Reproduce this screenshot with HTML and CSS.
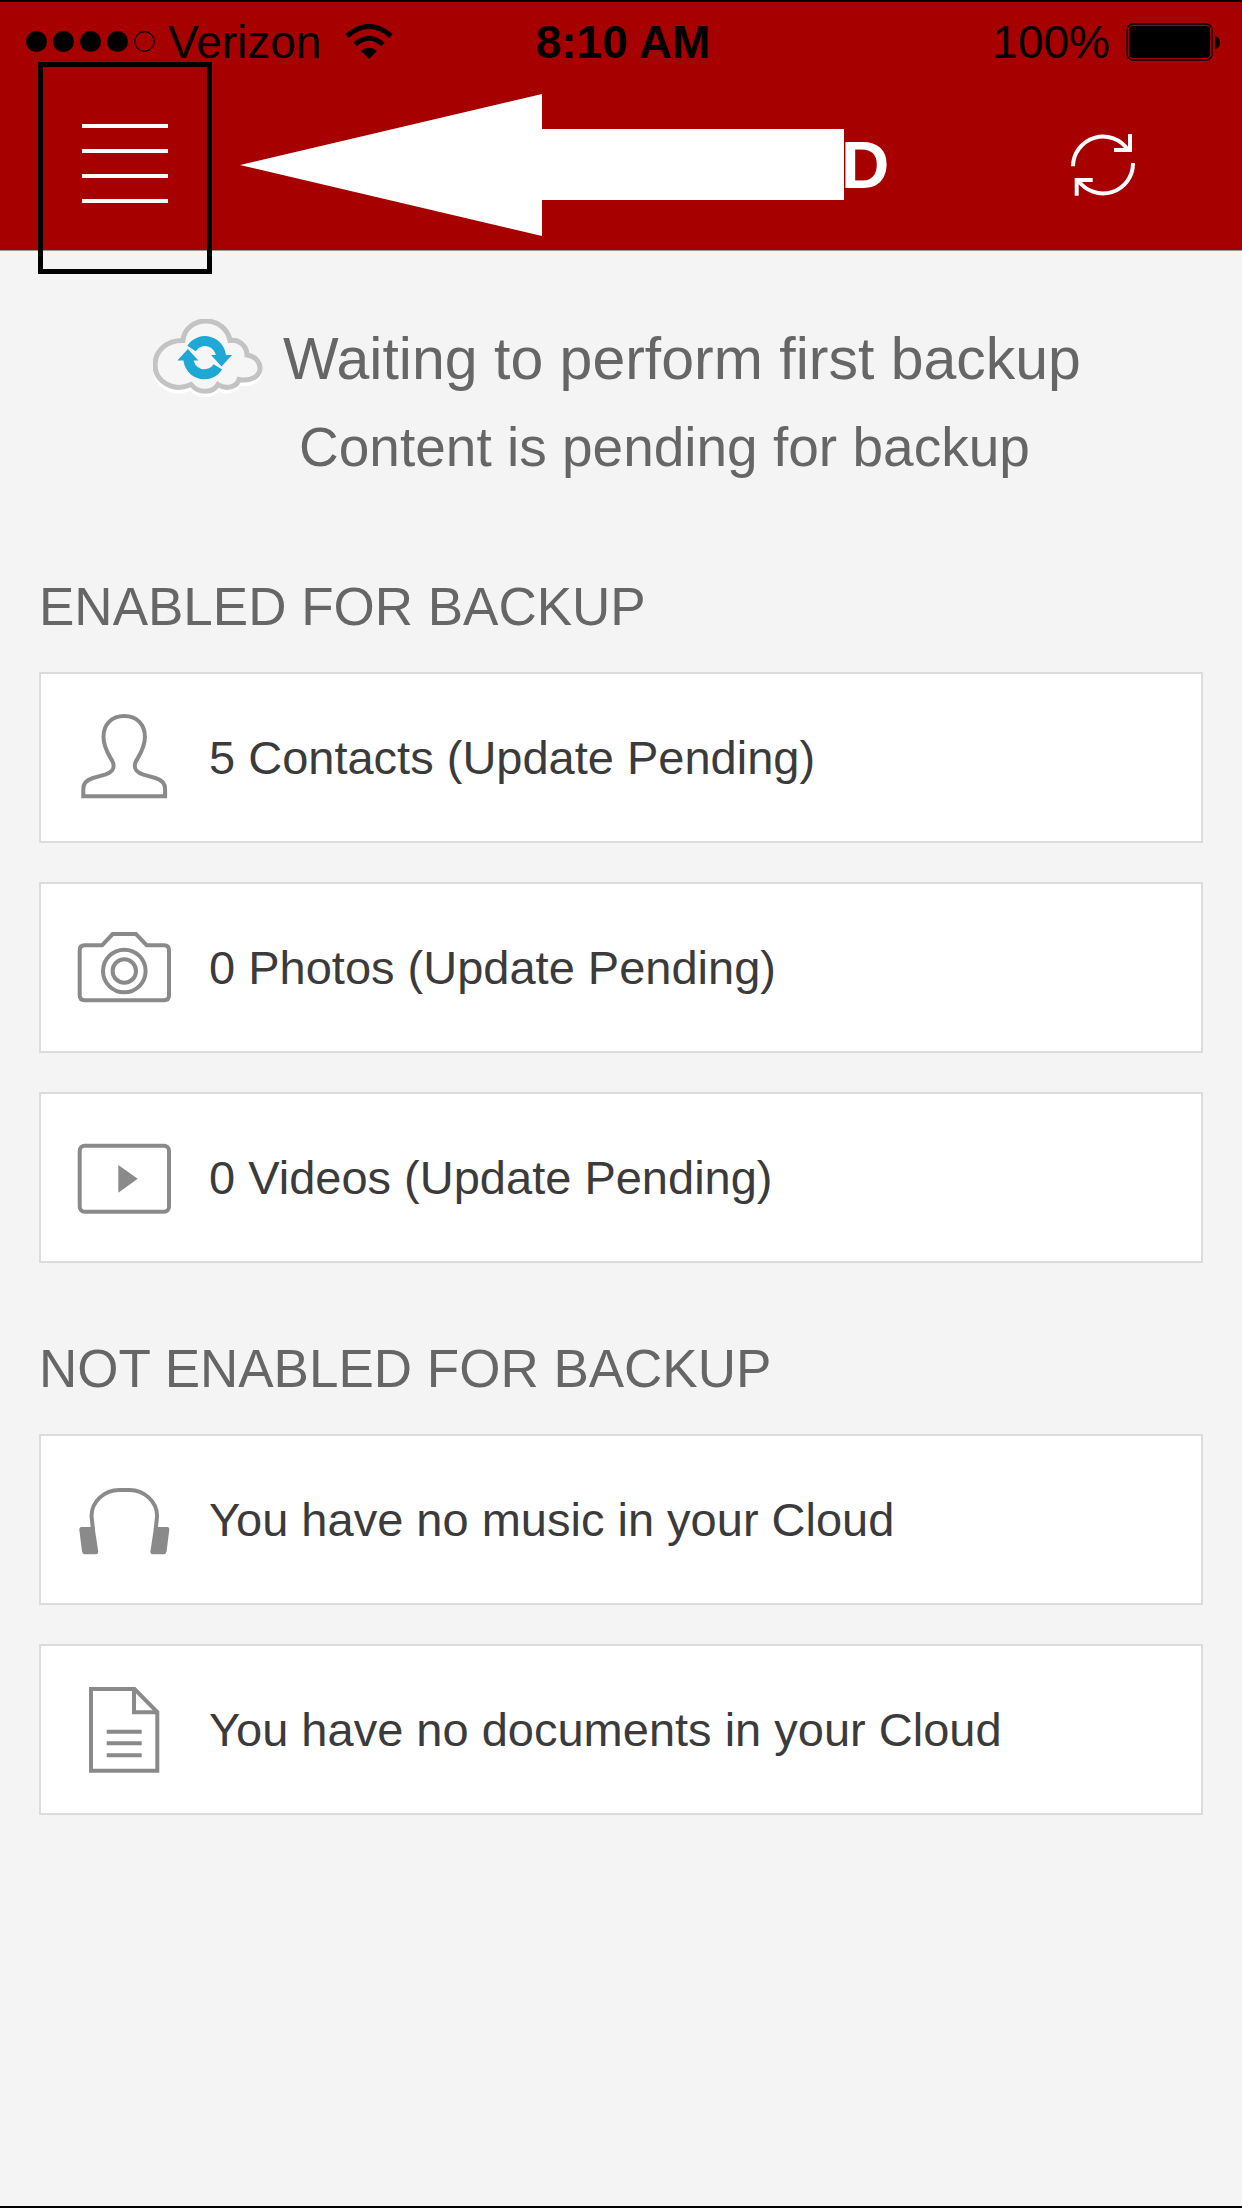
FILE: index.html
```html
<!DOCTYPE html>
<html lang="en">
<head>
    <meta charset="UTF-8">
    <meta name="viewport" content="width=device-width, initial-scale=1.0">
    <title>Cloud Backup</title>
    <link rel="stylesheet" href="styles.css">
</head>
<body>
    <header class="header">
        <div class="status-bar">
            <div class="status-left">
                <svg class="signal" width="130" height="22" viewBox="0 0 130 22">
                    <circle cx="10.5" cy="10.5" r="10.5"/>
                    <circle cx="37.5" cy="10.5" r="10.5"/>
                    <circle cx="64.5" cy="10.5" r="10.5"/>
                    <circle cx="91.5" cy="10.5" r="10.5"/>
                    <circle cx="118.5" cy="10.5" r="9.8" fill="none" stroke="#000" stroke-width="1.2"/>
                </svg>
                <span class="carrier">Verizon</span>
                <svg class="wifi" width="48" height="36" viewBox="0 0 48 36">
                    <path d="M2 12Q24 -7 46 12" fill="none" stroke="#000" stroke-width="5"/>
                    <path d="M10 20.5Q24 8 38 20.5" fill="none" stroke="#000" stroke-width="5"/>
                    <path d="M16 27Q24 20.5 32 27L24 35Z"/>
                </svg>
            </div>
            <span class="time">8:10 AM</span>
            <div class="status-right">
                <span>100%</span>
                <svg class="battery" width="94" height="38" viewBox="0 0 94 38">
                    <rect x="1" y="1" width="85" height="36" rx="6" fill="none" stroke="#000" stroke-width="1.4"/>
                    <rect x="3" y="3" width="81" height="32" rx="4"/>
                    <path d="M89 13Q94 14 94 19.5T89 26Z"/>
                </svg>
            </div>
        </div>
        <div class="nav">
            <button class="menu-button" type="button" aria-label="Menu">
                <svg width="86" height="82" viewBox="0 0 86 82">
                    <path d="M0 2H86M0 27H86M0 52H86M0 77H86" stroke="#fff" stroke-width="4"/>
                </svg>
            </button>
            <svg class="pointer" width="604" height="142" viewBox="0 0 604 142">
                <path d="M0 71L302 0V35H604V106H302V142Z" fill="#fff"/>
            </svg>
            <h1 class="title">D</h1>
            <button class="refresh-button" type="button" aria-label="Refresh">
                <svg width="64" height="64" viewBox="0 0 64 64" fill="none" stroke="#fff" stroke-width="4">
                    <path d="M2 33.3A30 30 0 0 1 57 17M59 1V17H43"/>
                    <path d="M62 30A30 30 0 0 1 7 47M5.7 62.7V47H21.7"/>
                </svg>
            </button>
        </div>
    </header>

    <main class="content">
        <section class="summary">
            <svg class="cloud" width="110" height="80" viewBox="0 0 110 80">
                <path d="M30 21.5C31 10 41 2 53 2S75 10 77 21.5C86 20 94 27 94 36C102 37 107 43 107 49C107 57 98 63 86 60.5C84 68 73 71 65 65.5C60 74 46 75 38 65.5C20 74 2 62 2 46C2 31 15 21 30 21.5Z" transform="translate(0 4)" fill="none" stroke="#fff" stroke-width="4"/>
                <path d="M30 21.5C31 10 41 2 53 2S75 10 77 21.5C86 20 94 27 94 36C102 37 107 43 107 49C107 57 98 63 86 60.5C84 68 73 71 65 65.5C60 74 46 75 38 65.5C20 74 2 62 2 46C2 31 15 21 30 21.5Z" fill="#f6f6f6" stroke="#c3c3c3" stroke-width="5"/>
                <g id="half">
                    <path d="M38.5 29.5A16 16 0 0 1 68 38" fill="none" stroke="#1fa7d6" stroke-width="10"/>
                    <path d="M58 36H79L68.5 47.5Z" fill="#1fa7d6"/>
                </g>
                <use href="#half" transform="rotate(180 51.7 38.7)"/>
            </svg>
            <div>
                <p class="summary-title">Waiting to perform first backup</p>
                <p class="summary-text">Content is pending for backup</p>
            </div>
        </section>

        <h2 class="section-title">ENABLED FOR BACKUP</h2>
        <ul class="list">
            <li class="card">
                <svg class="icon" viewBox="0 0 94 91">
                    <path d="M6.3 84.3V77C6.3 70 11 67.5 16 66L28 62.7C35 60.5 38 57 36 50.5C33 44 26.5 37 26.5 25C26.5 12 35 4 47.2 4C59.4 4 67.9 12 67.9 25C67.9 37 61.4 44 58.4 50.5C56.4 57 59.4 60.5 66.4 62.7L78.4 66C83.4 67.5 88.1 70 88.1 77V84.3Z"/>
                </svg>
                <span>5 Contacts (Update Pending)</span>
            </li>
            <li class="card">
                <svg class="icon" viewBox="0 0 94 91">
                    <path d="M25 23.3L35.7 12H59L69.7 23.3H87Q92 23.3 92 28.3V73.3Q92 78.3 87 78.3H7.7Q2.7 78.3 2.7 73.3V28.3Q2.7 23.3 7.7 23.3Z"/>
                    <circle cx="47.3" cy="49" r="21.3"/>
                    <circle cx="47.3" cy="49" r="11.7"/>
                </svg>
                <span>0 Photos (Update Pending)</span>
            </li>
            <li class="card">
                <svg class="icon" viewBox="0 0 94 91">
                    <rect x="2.7" y="13.7" width="89.3" height="66" rx="5"/>
                    <path class="solid" d="M41.3 33V60.7L60.7 46.7Z"/>
                </svg>
                <span>0 Videos (Update Pending)</span>
            </li>
        </ul>

        <h2 class="section-title">NOT ENABLED FOR BACKUP</h2>
        <ul class="list">
            <li class="card">
                <svg class="icon" viewBox="0 0 94 91">
                    <path d="M16 56L14.5 42C14.5 27 28 16 42 16H52.6C66.6 16 80.1 27 80.1 42L78.6 56"/>
                    <path class="solid" d="M4 53H17.5L21.3 78Q21 80.3 19 80.3H7.5Q5.5 80 5 77.5L2.3 55.5Q2.3 53 4 53Z"/>
                    <path class="solid" d="M90.6 53H77.1L73.3 78Q73.6 80.3 75.6 80.3H87.1Q89.1 80 89.6 77.5L92.3 55.5Q92.3 53 90.6 53Z"/>
                </svg>
                <span>You have no music in your Cloud</span>
            </li>
            <li class="card">
                <svg class="icon" viewBox="0 0 94 91">
                    <path d="M14 5H57.5L80.3 28V86.7H14ZM57 5V28.3H80.3"/>
                    <path d="M29.7 47.7H64.7M29.7 59.3H64.7M29.7 71.3H64.7"/>
                </svg>
                <span>You have no documents in your Cloud</span>
            </li>
        </ul>
    </main>
</body>
</html>
```

FILE: styles.css
```css
:root {
    --red: #a60000;
    --page-bg: #f4f4f4;
    --card-border: #dcdcdc;
    --heading: #666666;
    --text: #3b3b3b;
    --icon: #8a8a8a;
}

* {
    box-sizing: border-box;
}

body {
    margin: 0;
    min-height: 100vh;
    border-top: 2px solid #000;
    border-bottom: 2px solid #000;
    font-family: "Liberation Sans", Arial, sans-serif;
    background: var(--page-bg);
    color: var(--text);
}

svg {
    display: block;
    flex-shrink: 0;
}

.header {
    background: var(--red);
    border-bottom: 1px solid #999;
}

/* Status bar */
.status-bar {
    display: grid;
    grid-template-columns: 1fr auto 1fr;
    align-items: center;
    height: 78px;
    padding: 2px 22px 0 26px;
    font-size: 46px;
    line-height: 52px;
    color: #000;
}

.status-left,
.status-right {
    display: flex;
    align-items: center;
}

.status-left {
    gap: 12px;
}

.status-right {
    justify-content: flex-end;
    gap: 16px;
}

.wifi {
    margin-left: 12px;
}

.time {
    font-weight: bold;
}

/* Navigation */
.nav {
    display: flex;
    align-items: center;
    height: 170px;
    padding: 0 107px 0 38px;
}

button {
    padding: 0;
    border: none;
    background: none;
}

.menu-button {
    position: relative;
    display: flex;
    align-items: center;
    justify-content: center;
    width: 174px;
    height: 170px;
}

/* frame reaches past the bar on both sides */
.menu-button::after {
    content: "";
    position: absolute;
    top: -18px;
    right: 0;
    bottom: -24px;
    left: 0;
    border: 5px solid #000;
}

.pointer {
    margin-left: 28px;
}

.title {
    margin: 0 0 0 -3px;
    font-size: 67px;
    line-height: 76px;
    color: #fff;
}

.refresh-button {
    margin-left: auto;
}

/* Content */
.content {
    padding: 68px 39px 40px;
}

.summary {
    display: flex;
    justify-content: center;
    gap: 20px;
    padding: 0 8px 7px 0;
    color: var(--heading);
}

.summary p {
    margin: 0;
}

.summary-title {
    font-size: 59px;
    line-height: 80px;
}

.summary-text {
    padding-left: 16px;
    font-size: 55px;
    line-height: 96px;
}

.section-title {
    margin: 64px 0 23px;
    font-size: 53px;
    font-weight: normal;
    line-height: 84px;
    color: var(--heading);
}

.summary + .section-title {
    margin-top: 63px;
}

.list {
    display: grid;
    gap: 39px;
    margin: 0;
    padding: 0;
    list-style: none;
}

.card {
    display: flex;
    align-items: center;
    gap: 38px;
    height: 171px;
    padding: 0 36px;
    background: #fff;
    border: 2px solid var(--card-border);
    font-size: 47px;
    line-height: 56px;
}

.icon {
    width: 94px;
    height: 91px;
    fill: none;
    stroke: var(--icon);
    stroke-width: 4;
}

.icon .solid {
    fill: var(--icon);
    stroke: none;
}
```
